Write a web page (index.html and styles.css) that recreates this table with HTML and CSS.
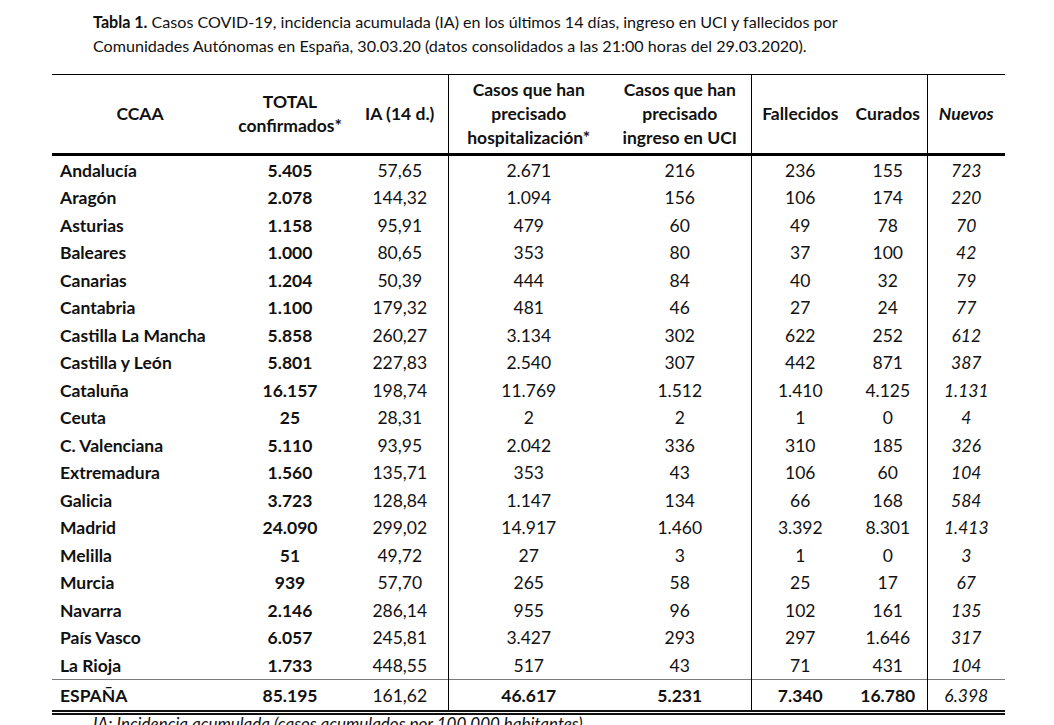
FILE: index.html
```html
<!DOCTYPE html>
<html lang="es">
<head>
<meta charset="utf-8">
<title>Tabla 1</title>
<link rel="stylesheet" href="styles.css">
</head>
<body>
<div class="page">
  <p class="caption"><b>Tabla 1.</b> Casos COVID-19, incidencia acumulada (IA) en los últimos 14 días, ingreso en UCI y fallecidos por<br>Comunidades Autónomas en España, 30.03.20 (datos consolidados a las 21:00 horas del 29.03.2020).</p>
  <table class="data">
    <colgroup>
      <col class="c-name"><col class="c-total"><col class="c-ia"><col class="c-hosp"><col class="c-uci"><col class="c-fall"><col class="c-cur"><col class="c-new">
    </colgroup>
    <thead>
      <tr>
        <th>CCAA</th>
        <th>TOTAL<br>confirmados*</th>
        <th>IA (14 d.)</th>
        <th class="sep">Casos que han<br>precisado<br>hospitalización*</th>
        <th>Casos que han<br>precisado<br>ingreso en UCI</th>
        <th class="sep">Fallecidos</th>
        <th>Curados</th>
        <th class="sep it">Nuevos</th>
      </tr>
    </thead>
    <tbody>
      <tr><td>Andalucía</td><td>5.405</td><td>57,65</td><td class="sep">2.671</td><td>216</td><td class="sep">236</td><td>155</td><td class="sep">723</td></tr>
      <tr><td>Aragón</td><td>2.078</td><td>144,32</td><td class="sep">1.094</td><td>156</td><td class="sep">106</td><td>174</td><td class="sep">220</td></tr>
      <tr><td>Asturias</td><td>1.158</td><td>95,91</td><td class="sep">479</td><td>60</td><td class="sep">49</td><td>78</td><td class="sep">70</td></tr>
      <tr><td>Baleares</td><td>1.000</td><td>80,65</td><td class="sep">353</td><td>80</td><td class="sep">37</td><td>100</td><td class="sep">42</td></tr>
      <tr><td>Canarias</td><td>1.204</td><td>50,39</td><td class="sep">444</td><td>84</td><td class="sep">40</td><td>32</td><td class="sep">79</td></tr>
      <tr><td>Cantabria</td><td>1.100</td><td>179,32</td><td class="sep">481</td><td>46</td><td class="sep">27</td><td>24</td><td class="sep">77</td></tr>
      <tr><td>Castilla La Mancha</td><td>5.858</td><td>260,27</td><td class="sep">3.134</td><td>302</td><td class="sep">622</td><td>252</td><td class="sep">612</td></tr>
      <tr><td>Castilla y León</td><td>5.801</td><td>227,83</td><td class="sep">2.540</td><td>307</td><td class="sep">442</td><td>871</td><td class="sep">387</td></tr>
      <tr><td>Cataluña</td><td>16.157</td><td>198,74</td><td class="sep">11.769</td><td>1.512</td><td class="sep">1.410</td><td>4.125</td><td class="sep">1.131</td></tr>
      <tr><td>Ceuta</td><td>25</td><td>28,31</td><td class="sep">2</td><td>2</td><td class="sep">1</td><td>0</td><td class="sep">4</td></tr>
      <tr><td>C. Valenciana</td><td>5.110</td><td>93,95</td><td class="sep">2.042</td><td>336</td><td class="sep">310</td><td>185</td><td class="sep">326</td></tr>
      <tr><td>Extremadura</td><td>1.560</td><td>135,71</td><td class="sep">353</td><td>43</td><td class="sep">106</td><td>60</td><td class="sep">104</td></tr>
      <tr><td>Galicia</td><td>3.723</td><td>128,84</td><td class="sep">1.147</td><td>134</td><td class="sep">66</td><td>168</td><td class="sep">584</td></tr>
      <tr><td>Madrid</td><td>24.090</td><td>299,02</td><td class="sep">14.917</td><td>1.460</td><td class="sep">3.392</td><td>8.301</td><td class="sep">1.413</td></tr>
      <tr><td>Melilla</td><td>51</td><td>49,72</td><td class="sep">27</td><td>3</td><td class="sep">1</td><td>0</td><td class="sep">3</td></tr>
      <tr><td>Murcia</td><td>939</td><td>57,70</td><td class="sep">265</td><td>58</td><td class="sep">25</td><td>17</td><td class="sep">67</td></tr>
      <tr><td>Navarra</td><td>2.146</td><td>286,14</td><td class="sep">955</td><td>96</td><td class="sep">102</td><td>161</td><td class="sep">135</td></tr>
      <tr><td>País Vasco</td><td>6.057</td><td>245,81</td><td class="sep">3.427</td><td>293</td><td class="sep">297</td><td>1.646</td><td class="sep">317</td></tr>
      <tr><td>La Rioja</td><td>1.733</td><td>448,55</td><td class="sep">517</td><td>43</td><td class="sep">71</td><td>431</td><td class="sep">104</td></tr>
    </tbody>
    <tfoot>
      <tr class="total"><td>ESPAÑA</td><td>85.195</td><td class="reg">161,62</td><td class="sep">46.617</td><td>5.231</td><td class="sep">7.340</td><td>16.780</td><td class="sep">6.398</td></tr>
    </tfoot>
  </table>
  <p class="note">IA: Incidencia acumulada (casos acumulados por 100.000 habitantes)</p>
</div>
</body>
</html>
```

FILE: styles.css
```css
html, body {
  margin: 0;
  padding: 0;
  background: #fff;
}

body {
  font-family: Lato, "Open Sans", sans-serif;
  color: #111;
}

.page {
  width: 1054px;
  height: 725px;
  overflow: hidden;
  padding: 10px 0 0 0;
  box-sizing: border-box;
}

.caption {
  margin: 0 0 0 93px;
  font-size: 16.1px;
  line-height: 24px;
}

.caption b {
  font-weight: 700;
}

.data {
  margin: 16px 0 0 52px;
  width: 953px;
  border-collapse: collapse;
  table-layout: fixed;
  font-size: 17.5px;
}

.c-name { width: 176px; }
.c-total { width: 124px; }
.c-ia { width: 96px; }
.c-hosp { width: 161px; }
.c-uci { width: 142px; }
.c-fall { width: 98px; }
.c-cur { width: 78px; }
.c-new { width: 78px; }

.data thead tr {
  border-top: 1.5px solid #000;
  border-bottom: 3px solid #000;
}

.data th {
  font-weight: 700;
  text-align: center;
  vertical-align: middle;
  line-height: 24px;
  padding: 3px 0 3px 0;
  white-space: nowrap;
}

.data th.it {
  font-style: italic;
}

.data td {
  height: 27.5px;
  line-height: 27.5px;
  padding: 0;
  text-align: center;
  white-space: nowrap;
}

.data .sep {
  border-left: 1px solid #000;
}

.data td:nth-child(1) {
  text-align: left;
  padding-left: 8px;
  font-weight: 700;
}

.data td:nth-child(2) {
  font-weight: 700;
}

.data td:nth-child(8) {
  font-style: italic;
}

.data tbody tr:first-child td {
  height: 27.5px;
  padding-top: 0.5px;
}

.data .total {
  border-top: 1.5px solid #7a7a7a;
  border-bottom: 5px double #111;
}

.data .total td {
  font-weight: 700;
  height: 27px;
  padding-top: 2px;
}

.data .total td.reg,
.data .total td:nth-child(8) {
  font-weight: 400;
}

.note {
  margin: -1px 0 0 93px;
  font-size: 17px;
  font-style: italic;
  line-height: 20px;
}
```
